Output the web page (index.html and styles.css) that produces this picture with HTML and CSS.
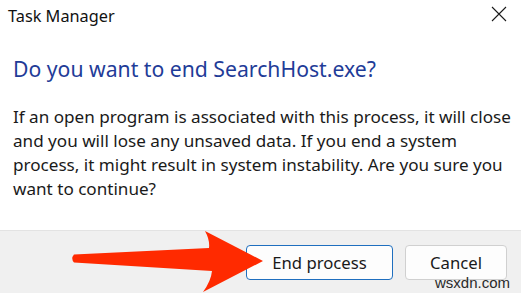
FILE: index.html
```html
<!DOCTYPE html>
<html>
<head>
<meta charset="utf-8">
<link rel="stylesheet" href="styles.css">
</head>
<body>
<div class="dialog">
  <div class="titlebar">
    <span class="title">Task Manager</span>
    <svg class="close" width="16" height="16" viewBox="0 0 16 16"><path d="M1 1 L15 15 M15 1 L1 15" stroke="#1a1a1a" stroke-width="1.1" fill="none"/></svg>
  </div>
  <div class="content">
    <h1 class="heading">Do you want to end SearchHost.exe?</h1>
    <p class="body">If an open program is associated with this process, it will close<br>and you will lose any unsaved data. If you end a system<br>process, it might result in system instability. Are you sure you<br>want to continue?</p>
  </div>
  <div class="footer">
    <button class="btn primary">End process</button>
    <button class="btn">Cancel</button>
    <span class="watermark">wsxdn.com</span>
  </div>
  <svg class="arrow" width="521" height="293" viewBox="0 0 521 293">
    <path d="M74 254.5 L209 248 Q210 240 205 231 L263 261 L203 292 Q211 281 212 271 L74 262.5 Q70.5 258.5 74 254.5 Z" fill="#ff2a00"/>
  </svg>
</div>
</body>
</html>
```
FILE: styles.css
```css
html, body {
  margin: 0;
  padding: 0;
  background: #ffffff;
}
.dialog {
  position: relative;
  width: 521px;
  height: 293px;
  overflow: hidden;
  display: flex;
  flex-direction: column;
  font-family: "Noto Sans", "Open Sans", sans-serif;
  color: #1a1a1a;
}
.titlebar {
  height: 31px;
  display: flex;
  align-items: center;
  justify-content: space-between;
  padding: 0 14px 2px 8px;
}
.title {
  font-size: 16.3px;
  color: #111;
}
.close {
  display: block;
  margin-top: -3px;
}
.content {
  flex: 1;
  padding: 0 0 0 13px;
}
.heading {
  margin: 21px 0 0 0;
  font-size: 21.2px;
  font-weight: 400;
  color: #1f3c98;
  line-height: 30px;
}
.body {
  margin: 21px 0 0 0;
  font-size: 17.1px;
  line-height: 24px;
  color: #1a1a1a;
  white-space: nowrap;
}
.footer {
  position: relative;
  height: 63px;
  background: #f0f0f0;
  border-top: 1px solid #e3e3e3;
  display: flex;
  justify-content: flex-end;
  align-items: flex-start;
  gap: 12px;
  padding: 14px 14px 0 0;
  box-sizing: border-box;
}
.btn {
  height: 35px;
  border-radius: 4px;
  border: 1px solid #d0d0d0;
  background: #fdfdfd;
  font-family: "Noto Sans", "Open Sans", sans-serif;
  font-size: 16.7px;
  color: #1a1a1a;
  padding: 0;
  width: 102px;
}
.btn.primary {
  width: 147px;
  border-color: #1f6fbf;
}
.watermark {
  position: absolute;
  right: 11px;
  bottom: 2px;
  font-family: "Liberation Sans", Arial, sans-serif;
  font-size: 15px;
  color: #2a2a2a;
}
.arrow {
  position: absolute;
  left: 0;
  top: 0;
  pointer-events: none;
}
```
